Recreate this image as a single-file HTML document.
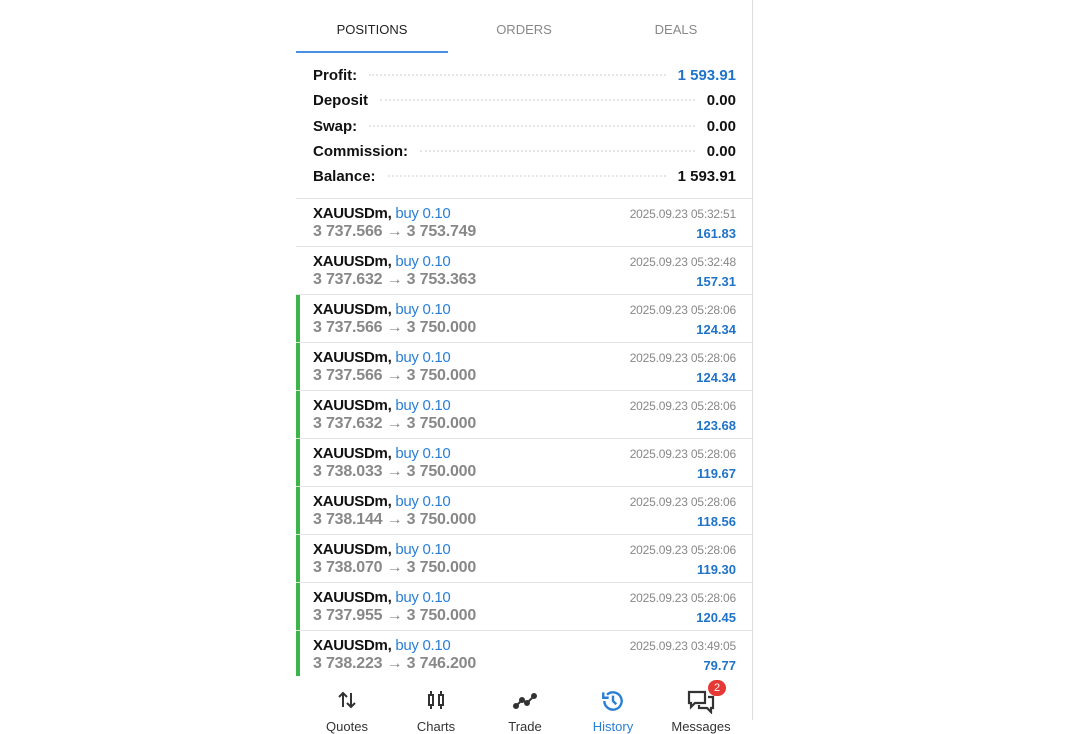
<!DOCTYPE html><html><head><style>
body{margin:0;width:1080px;height:720px;background:#fff;font-family:"Liberation Sans",Arial,sans-serif;position:relative;overflow:hidden}
.app{position:absolute;left:296px;top:0;width:456px;height:720px;border-right:1px solid #ddd}
.tab{position:absolute;top:22px;font-size:13px;color:#888;width:152px;text-align:center}
.sum{position:absolute;left:17px;right:16px;font-size:15px;font-weight:bold;color:#111;display:flex;align-items:baseline}
.sum .d{flex:1;border-bottom:2px dotted #e6e6e6;margin:0 12px;height:0;position:relative;top:-4px}
.row{position:absolute;left:0;width:456px;height:47px;border-top:1px solid #e3e3e3}
.row .a{position:absolute;left:17px;top:6px;font-size:15px;font-weight:bold;color:#111;letter-spacing:-0.3px}
.row .a span{color:#2a7fd4;font-weight:normal}
.row .b{position:absolute;left:17px;top:24px;font-size:16px;font-weight:bold;color:#888;letter-spacing:-0.2px}
.row .t{position:absolute;right:16px;top:8px;font-size:12px;color:#888;letter-spacing:-0.2px}
.row .p{position:absolute;right:16px;top:27px;font-size:13px;font-weight:bold;color:#1f73c8}
.g{position:absolute;left:0;top:0;width:4px;height:48px;background:#3cb54a}
.nav{position:absolute;top:688px;width:90px;text-align:center}
.nav div{font-size:13px;color:#333;margin-top:2px}
</style></head><body><div class="app">
<div class="tab" style="left:0;color:#222">POSITIONS</div>
<div class="tab" style="left:152px">ORDERS</div>
<div class="tab" style="left:304px">DEALS</div>
<div style="position:absolute;left:0;top:51px;width:152px;height:2px;background:#4a90e2"></div>
<div class="sum" style="top:67px">Profit:<i class="d"></i><span style="color:#1f73c8">1 593.91</span></div>
<div class="sum" style="top:92px">Deposit<i class="d"></i>0.00</div>
<div class="sum" style="top:118px">Swap:<i class="d"></i>0.00</div>
<div class="sum" style="top:143px">Commission:<i class="d"></i>0.00</div>
<div class="sum" style="top:168px">Balance:<i class="d"></i>1 593.91</div>
<div class="row" style="top:198px"><div class="a">XAUUSDm, <span>buy 0.10</span></div><div class="b">3 737.566 → 3 753.749</div><div class="t">2025.09.23 05:32:51</div><div class="p">161.83</div></div>
<div class="row" style="top:246px"><div class="a">XAUUSDm, <span>buy 0.10</span></div><div class="b">3 737.632 → 3 753.363</div><div class="t">2025.09.23 05:32:48</div><div class="p">157.31</div></div>
<div class="row" style="top:294px"><i class="g"></i><div class="a">XAUUSDm, <span>buy 0.10</span></div><div class="b">3 737.566 → 3 750.000</div><div class="t">2025.09.23 05:28:06</div><div class="p">124.34</div></div>
<div class="row" style="top:342px"><i class="g"></i><div class="a">XAUUSDm, <span>buy 0.10</span></div><div class="b">3 737.566 → 3 750.000</div><div class="t">2025.09.23 05:28:06</div><div class="p">124.34</div></div>
<div class="row" style="top:390px"><i class="g"></i><div class="a">XAUUSDm, <span>buy 0.10</span></div><div class="b">3 737.632 → 3 750.000</div><div class="t">2025.09.23 05:28:06</div><div class="p">123.68</div></div>
<div class="row" style="top:438px"><i class="g"></i><div class="a">XAUUSDm, <span>buy 0.10</span></div><div class="b">3 738.033 → 3 750.000</div><div class="t">2025.09.23 05:28:06</div><div class="p">119.67</div></div>
<div class="row" style="top:486px"><i class="g"></i><div class="a">XAUUSDm, <span>buy 0.10</span></div><div class="b">3 738.144 → 3 750.000</div><div class="t">2025.09.23 05:28:06</div><div class="p">118.56</div></div>
<div class="row" style="top:534px"><i class="g"></i><div class="a">XAUUSDm, <span>buy 0.10</span></div><div class="b">3 738.070 → 3 750.000</div><div class="t">2025.09.23 05:28:06</div><div class="p">119.30</div></div>
<div class="row" style="top:582px"><i class="g"></i><div class="a">XAUUSDm, <span>buy 0.10</span></div><div class="b">3 737.955 → 3 750.000</div><div class="t">2025.09.23 05:28:06</div><div class="p">120.45</div></div>
<div class="row" style="top:630px;height:45px"><i class="g" style="height:45px"></i><div class="a">XAUUSDm, <span>buy 0.10</span></div><div class="b">3 738.223 → 3 746.200</div><div class="t">2025.09.23 03:49:05</div><div class="p">79.77</div></div>
<div class="nav" style="left:6px"><svg width="24" height="24" viewBox="0 0 24 24" fill="none" stroke="#333" stroke-width="2"><path d="M8 19V5M4 9l4-4 4 4M16 5v14M12 15l4 4 4-4"/></svg><div>Quotes</div></div>
<div class="nav" style="left:95px"><svg width="24" height="24" viewBox="0 0 24 24" fill="none" stroke="#333" stroke-width="2"><rect x="5" y="7" width="4" height="10"/><rect x="15" y="7" width="4" height="10"/><path d="M7 3v4M7 17v4M17 3v4M17 17v4"/></svg><div>Charts</div></div>
<div class="nav" style="left:184px"><svg width="24" height="24" viewBox="0 0 24 24" fill="#333" stroke="#333" stroke-width="2"><path d="M3 18l6-6 5 3 7-7" fill="none"/><circle cx="3" cy="18" r="2"/><circle cx="9" cy="12" r="2"/><circle cx="14" cy="15" r="2"/><circle cx="21" cy="8" r="2"/></svg><div>Trade</div></div>
<div class="nav" style="left:272px"><svg width="26" height="26" viewBox="0 0 24 24" fill="none" stroke="#2a7fd4" stroke-width="2.2"><path d="M4 12a8 8 0 1 0 2.5-5.8M3 4v5h5"/><path d="M12 7v5l3 3"/></svg><div style="color:#2a7fd4;margin-top:0">History</div></div>
<div class="nav" style="left:360px"><svg width="30" height="26" viewBox="0 0 30 26" fill="none" stroke="#333" stroke-width="2.2"><path d="M3 4h16v11H9l-4 4v-4H3z"/><path d="M22 9h5v11h-2v4l-4-4h-8v-3"/></svg><span style="position:absolute;left:52px;top:-8px;width:18px;height:16px;border-radius:8px;background:#e53935;color:#fff;font-size:11px;line-height:16px">2</span><div style="margin-top:0">Messages</div></div>
</div></body></html>
